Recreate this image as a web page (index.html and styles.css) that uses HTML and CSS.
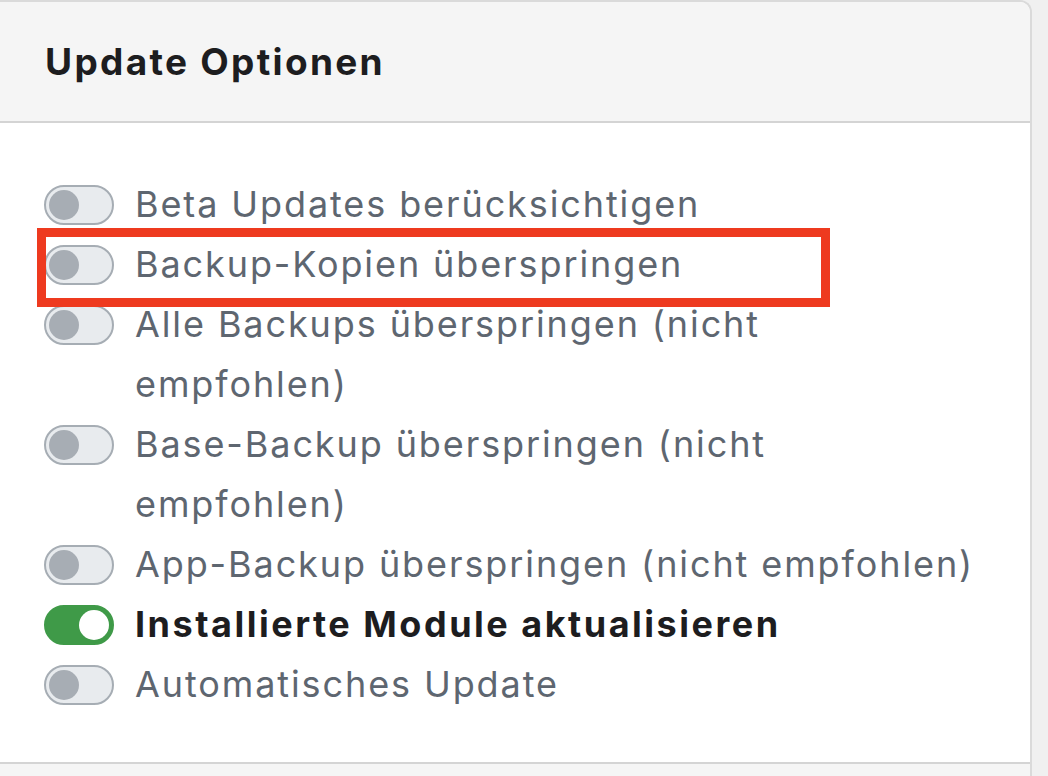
FILE: index.html
```html
<!DOCTYPE html>
<html lang="de">
<head>
    <meta charset="UTF-8">
    <meta name="viewport" content="width=device-width, initial-scale=1.0">
    <title>Update Optionen</title>
    <link rel="stylesheet" href="styles.css">
</head>
<body>
    <div class="card">
        <div class="card-header">
            <h2>Update Optionen</h2>
        </div>

        <div class="card-body">
            <label class="option">
                <span class="switch"></span>
                <span class="option-text">Beta Updates berücksichtigen</span>
            </label>
            <label class="option">
                <span class="switch"></span>
                <span class="option-text">Backup-Kopien überspringen</span>
            </label>
            <label class="option">
                <span class="switch"></span>
                <span class="option-text">Alle Backups überspringen (nicht<br>empfohlen)</span>
            </label>
            <label class="option">
                <span class="switch"></span>
                <span class="option-text">Base-Backup überspringen (nicht<br>empfohlen)</span>
            </label>
            <label class="option">
                <span class="switch"></span>
                <span class="option-text">App-Backup überspringen (nicht empfohlen)</span>
            </label>
            <label class="option checked">
                <span class="switch"></span>
                <span class="option-text">Installierte Module aktualisieren</span>
            </label>
            <label class="option">
                <span class="switch"></span>
                <span class="option-text">Automatisches Update</span>
            </label>

            <div class="highlight"></div>
        </div>

        <div class="card-footer"></div>
    </div>
</body>
</html>
```

FILE: styles.css
```css
body {
    margin: 0;
    background-color: #f0f0f0;
    font-family: 'Inter', 'Liberation Sans', sans-serif;
    overflow: hidden;
}

.card {
    width: 1030px;
    margin-left: -2px;
    background-color: #fff;
    border: 2px solid #dadada;
    border-bottom: none;
    border-radius: 0 12px 0 0;
    overflow: hidden;
}

.card-header {
    height: 119px;
    display: flex;
    align-items: center;
    padding-left: 45px;
    background-color: #f5f5f5;
    border-bottom: 2px solid #d4d4d4;
}
h2 {
    margin: 0;
    font-size: 37px;
    font-weight: 700;
    letter-spacing: 2.3px;
    color: #1d1d1f;
}

.card-body {
    position: relative;
    height: 588px;
    padding: 51px 0 0 44px;
    border-bottom: 2px solid #d4d4d4;
}

.option {
    display: flex;
    align-items: flex-start;
    gap: 21px;
    font-size: 36px;
    line-height: 60px;
    letter-spacing: 1.9px;
    color: #5e6670;
}
.option.checked {
    color: #1d1d1f;
    font-weight: 700;
    letter-spacing: 2.5px;
}

.switch {
    position: relative;
    flex: none;
    box-sizing: border-box;
    width: 70px;
    height: 40px;
    margin-top: 11px;
    background-color: #e8ebee;
    border: 2px solid #a6adb4;
    border-radius: 20px;
}
.switch::after {
    content: "";
    position: absolute;
    top: 3px;
    left: 3px;
    width: 30px;
    height: 30px;
    background-color: #a7adb4;
    border-radius: 50%;
}
.checked .switch {
    background-color: #3f9a48;
    border-color: #3f9a48;
}
.checked .switch::after {
    left: auto;
    right: 3px;
    background-color: #fff;
}

.highlight {
    position: absolute;
    left: 37px;
    top: 105px;
    width: 775px;
    height: 61px;
    border: 9px solid #ee3a1f;
}

.card-footer {
    height: 20px;
    background-color: #f5f5f5;
}
```
